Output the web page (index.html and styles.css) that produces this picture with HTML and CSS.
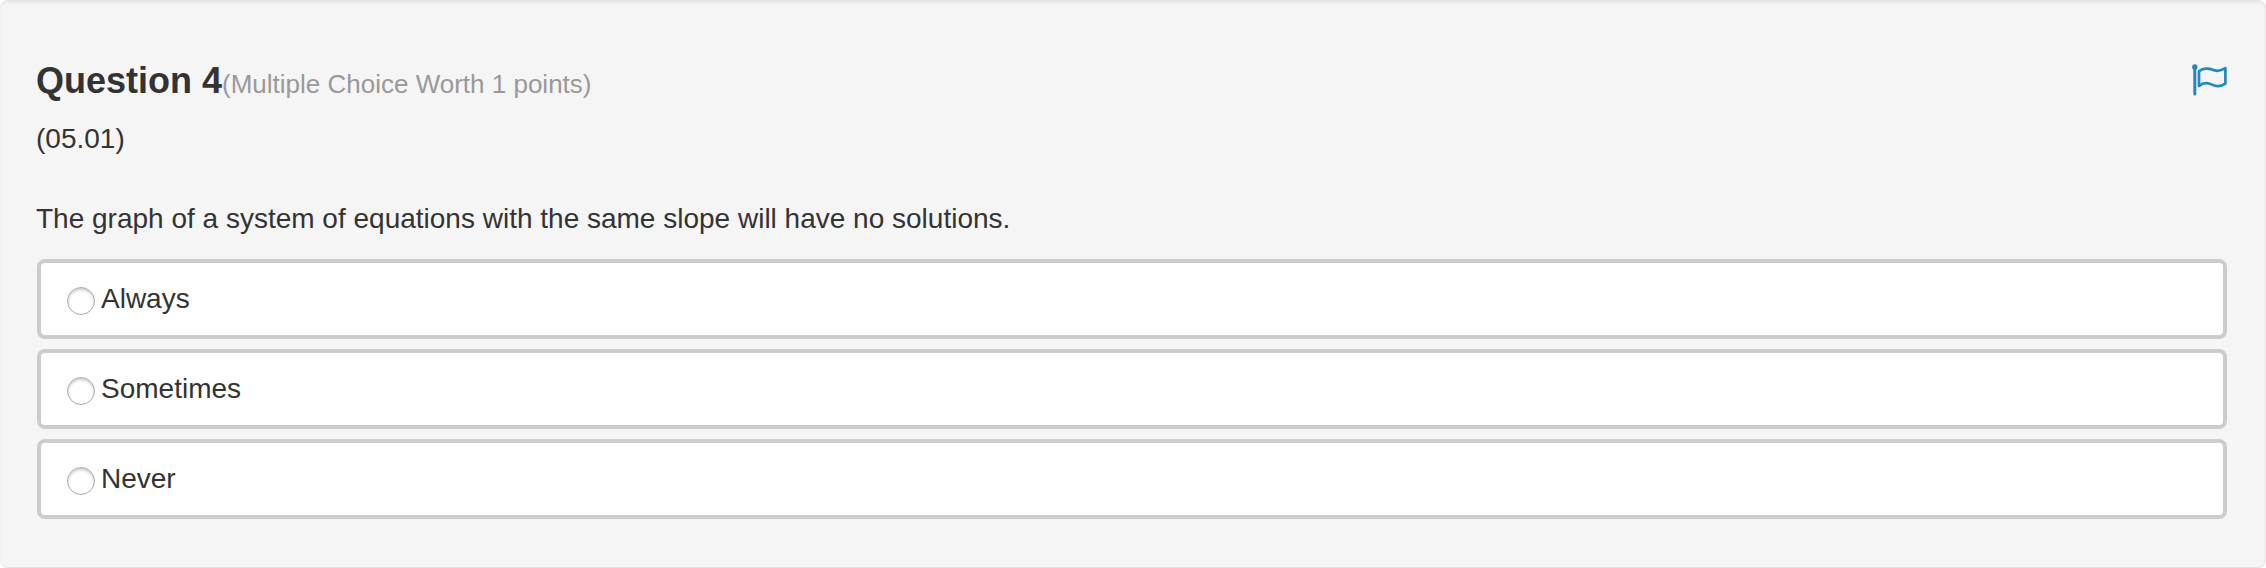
FILE: index.html
```html
<!DOCTYPE html>
<html lang="en">
<head>
<meta charset="utf-8">
<title>Question 4</title>
<link rel="stylesheet" href="styles.css">
</head>
<body>
<main class="question">
  <header class="question-header">
    <h1 class="question-title">Question 4<small class="question-worth">(Multiple Choice Worth 1 points)</small></h1>
    <button class="flag-button" type="button" aria-label="Flag question">
      <svg class="flag-icon" viewBox="0 0 36 32" aria-hidden="true">
        <circle cx="3.8" cy="3" r="2.7" fill="currentColor"/>
        <path d="M3.8 3V30" fill="none" stroke="currentColor" stroke-width="3" stroke-linecap="round"/>
        <path d="M8 7.2C11.5 4.3 17 3.8 21 5.6C25.5 7.7 30 7 34.4 4.2V19.6C30 22.6 25.5 22.8 21 20.6C16.5 18.4 12 18.8 8 21.9Z" fill="none" stroke="currentColor" stroke-width="2.7" stroke-linejoin="round"/>
      </svg>
    </button>
  </header>
  <p class="question-text">(05.01)</p>
  <p class="question-text" id="prompt">The graph of a system of equations with the same slope will have no solutions.</p>
  <div class="choices" role="radiogroup" aria-labelledby="prompt">
    <label class="choice"><input class="choice-radio" type="radio" name="answer" value="always">Always</label>
    <label class="choice"><input class="choice-radio" type="radio" name="answer" value="sometimes">Sometimes</label>
    <label class="choice"><input class="choice-radio" type="radio" name="answer" value="never">Never</label>
  </div>
</main>
</body>
</html>
```
FILE: styles.css
```css
* {
  box-sizing: border-box;
}

body {
  margin: 0;
  background: #fff;
  color: #333;
  font-family: "Liberation Sans", Arial, sans-serif;
  font-size: 28px;
  line-height: 40px;
}

.question {
  padding: 60px 38px 48px 36px;
  background: #f5f5f5;
  border: 1px solid #e3e3e3;
  border-left: 0;
  border-radius: 8px;
  box-shadow: inset 0 2px 2px rgba(0, 0, 0, 0.05);
}

.question-header {
  display: flex;
  justify-content: space-between;
  align-items: flex-start;
  margin-bottom: 15px;
}

.question-title {
  margin: 0;
  font-size: 36px;
  line-height: 40px;
}

.question-worth {
  color: #999;
  font-size: 26px;
  font-weight: 400;
}

.flag-button {
  margin: 0;
  padding: 3px 0 0;
  border: 0;
  background: none;
  color: #2487bd;
  cursor: pointer;
}

.flag-icon {
  display: block;
  width: 36px;
  height: 32px;
}

.question-text {
  margin: 0 0 40px;
}

/* The exercise number is followed by a blank line; the choices sit closer to the prompt. */
.choices {
  display: grid;
  gap: 10px;
  margin: -20px 0 0 1px;
}

.choice {
  display: flex;
  align-items: center;
  gap: 6px;
  padding: 16px 26px;
  background: #fff;
  border: 4px solid #ccc;
  border-radius: 8px;
}

.choice-radio {
  appearance: none;
  width: 28px;
  height: 28px;
  margin: 4px 0 0;
  border: 1px solid #aaa;
  border-radius: 50%;
  background: #fff;
  box-shadow: inset 0 2px 3px rgba(0, 0, 0, 0.2);
}
```
